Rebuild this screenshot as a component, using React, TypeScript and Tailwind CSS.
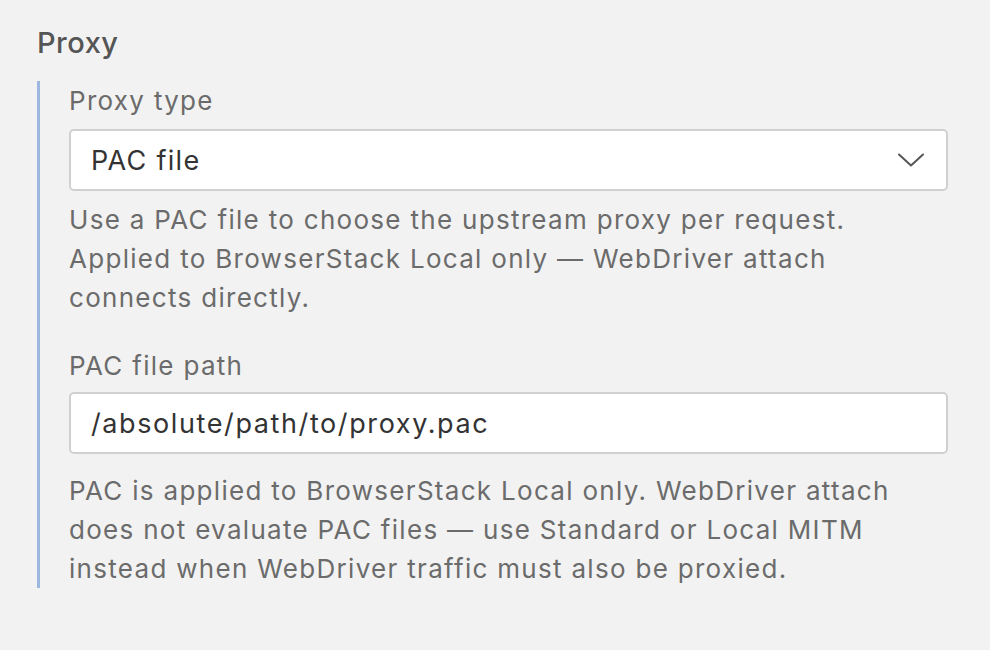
const font = { fontFamily: "Inter, 'Liberation Sans', sans-serif" };

function Chevron() {
  return (
    <svg width="26" height="14" viewBox="0 0 26 14" fill="none" className="text-[#555]">
      <path d="M1 1.5 13 12.5 25 1.5" stroke="currentColor" strokeWidth="2" strokeLinecap="round" strokeLinejoin="round" />
    </svg>
  );
}

export default function App() {
  return (
    <div className="min-h-screen bg-[#f2f2f2] text-[#6b6b6b]" style={font}>
      <div className="pl-[37px] pr-[42px] pt-[21px]">
        <h2 className="text-[29px] leading-[44px] font-medium tracking-[0.5px] text-[#555]">Proxy</h2>
        <div className="mt-[16px] border-l-[3px] border-[#9db8e0] pl-[29px]">
          <label className="block text-[26px] leading-[40px] tracking-[1.3px]">Proxy type</label>
          <div className="mt-[8px] h-[62px] flex items-center justify-between rounded-[5px] border-2 border-[#d0d0d0] bg-white pl-[20px] pr-[22px]">
            <span className="pt-[2px] text-[27px] tracking-[1.3px] text-[#333]">PAC file</span>
            <Chevron />
          </div>
          <p className="mt-[9px] max-w-[850px] text-[26px] leading-[39px] tracking-[1.3px]">
            Use a PAC file to choose the upstream proxy per request. Applied to BrowserStack Local only — WebDriver attach
            connects directly.
          </p>

          <label className="mt-[29px] block text-[26px] leading-[40px] tracking-[1.3px]">PAC file path</label>
          <div className="mt-[6px] h-[62px] flex items-center rounded-[5px] border-2 border-[#d0d0d0] bg-white pl-[20px]">
            <span className="pt-[2px] text-[27px] tracking-[1.6px] text-[#333]">/absolute/path/to/proxy.pac</span>
          </div>
          <p className="mt-[17px] mb-[-5px] max-w-[850px] text-[26px] leading-[39px] tracking-[1.3px]">
            PAC is applied to BrowserStack Local only. WebDriver attach does not evaluate PAC files — use Standard or Local
            MITM instead when WebDriver traffic must also be proxied.
          </p>
        </div>
      </div>
    </div>
  );
}
